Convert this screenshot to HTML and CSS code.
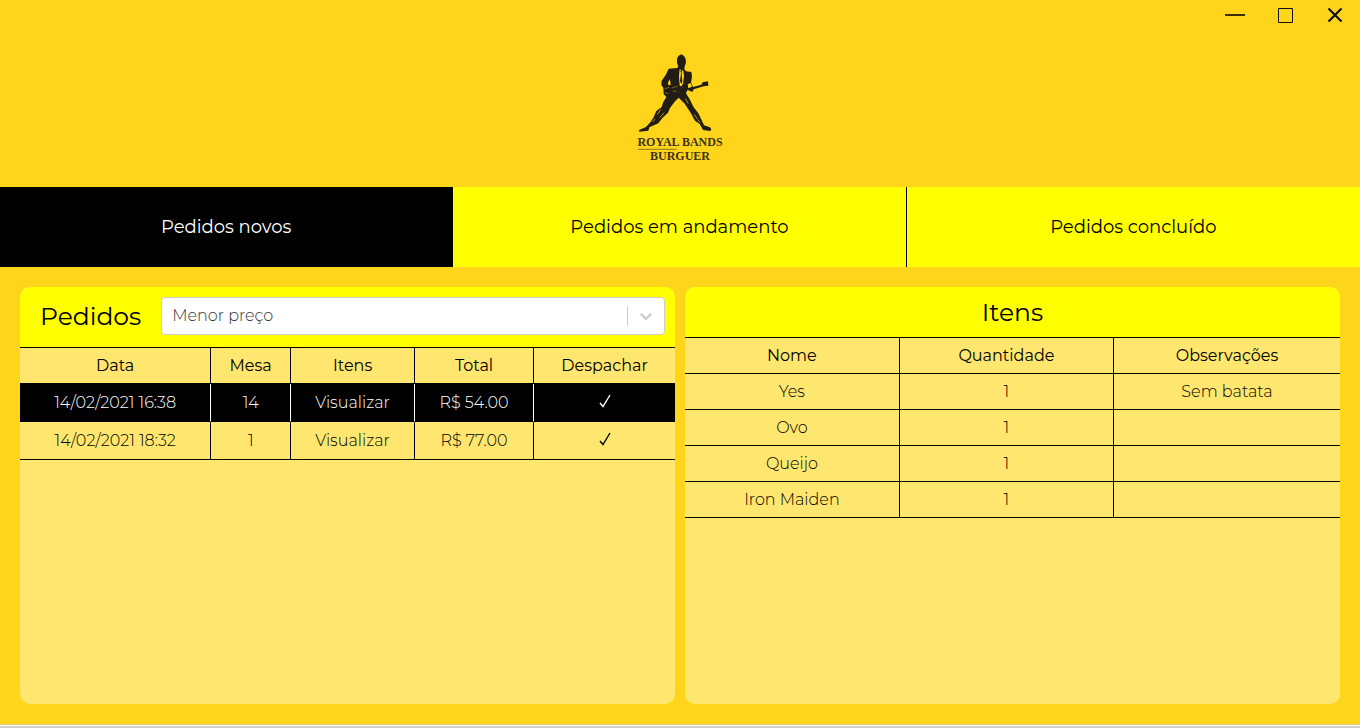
FILE: index.html
```html
<!DOCTYPE html>
<html lang="pt-BR">
<head>
<meta charset="utf-8">
<meta name="viewport" content="width=device-width, initial-scale=1">
<title>Royal Bands Burguer</title>
<link rel="stylesheet" href="styles.css">
</head>
<body>
<div class="app">
  <div class="titlebar">
    <button class="window-button" type="button" aria-label="Minimizar"><svg width="20" height="20" viewBox="0 0 20 20"><path d="M0 10H20" stroke="#3b3005" stroke-width="2"/></svg></button>
    <button class="window-button" type="button" aria-label="Maximizar"><svg width="20" height="20" viewBox="0 0 20 20"><path d="M3.500 3.500H17.500V17.500H3.500Z" fill="none" stroke="#111" stroke-width="1"/></svg></button>
    <button class="window-button" type="button" aria-label="Fechar"><svg width="20" height="20" viewBox="0 0 20 20"><path d="M3.500 3.500L16.500 16.500M16.500 3.500L3.500 16.500" stroke="#111" stroke-width="2.200"/></svg></button>
  </div>

  <header class="brand">
    <svg class="logo" viewBox="0 0 300 345" role="img" aria-label="Royal Bands Burguer">
      <g transform="translate(15 0)">
        <path fill="#211c14" d="M139 13L147 18L152 27L153 38L149 49L148 57L153 64L169 66L171 80L168 97L174 111L199 104L203 97L219 94L220 107L206 109L176 118L173 125L164 123L158 119L153 130L164 148L176 172L190 190L200 211L207 226L225 232L229 238L226 243L204 240L194 222L180 212L166 187L148 160L131 143L119 155L105 174L99 188L82 204L70 220L43 232L40 242L13 245L12 240L33 231L46 217L55 203L64 183L80 171L85 156L94 141L86 132L85 114L79 104L80 92L92 75L101 56L127 54L130 49L126 39L126 26L131 17Z"/>
        <path fill="#ffd51b" d="M134 58L145 62L147 78L144 101L139 109L134 107L132 78Z"/>
        <path fill="#211c14" d="M136 60L142 62L140 69L142 96L139 102L135 94L138 69Z"/>
        <path fill="#ffd51b" d="M99 97L105 88L107 105L100 106ZM158 103L167 99L171 110L160 115Z"/>
        <path d="M89 116L103 112M110 114L128 109M113 123L125 124M90 128L101 131" fill="none" stroke="#a58a17" stroke-width="2"/>
        <path d="M77 178L67 194M88 188L74 203M60 207L53 216M151 146L160 161M178 193L187 207M188 208L195 218" fill="none" stroke="#ad9018" stroke-width="3"/>
      </g>
      <g class="logo-text">
        <text x="150" y="288" text-anchor="middle">ROYAL BANDS</text>
        <text x="150" y="330" text-anchor="middle">BURGUER</text>
      </g>
      <path d="M24 298H140" stroke="#8f7820" stroke-width="3"/>
    </svg>
  </header>

  <nav class="tabs" aria-label="Estado dos pedidos">
    <button class="tab tab-active" type="button">Pedidos novos</button>
    <button class="tab" type="button">Pedidos em andamento</button>
    <button class="tab" type="button">Pedidos concluído</button>
  </nav>

  <main class="panels">
    <section class="panel">
      <div class="panel-head orders-head">
        <h2 class="panel-title"><label for="sort">Pedidos</label></h2>
        <div class="select-box">
          <select class="select" id="sort">
            <option>Menor preço</option>
            <option>Maior preço</option>
          </select>
          <span class="select-arrow" aria-hidden="true"><svg width="20" height="20" viewBox="0 0 20 20"><path d="M4.516 7.548c0.436-0.446 1.043-0.481 1.576 0l3.908 3.747 3.908-3.747c0.533-0.481 1.141-0.446 1.574 0 0.436 0.445 0.408 1.197 0 1.615l-4.695 4.502c-0.217 0.223-0.502 0.335-0.787 0.335s-0.570-0.112-0.789-0.335l-4.695-4.502c-0.408-0.418-0.436-1.170 0-1.615z" fill="#ccc"/></svg></span>
        </div>
      </div>
      <table class="grid orders">
        <colgroup><col class="col-date"><col class="col-table"><col class="col-items"><col class="col-total"><col class="col-send"></colgroup>
        <thead><tr><th>Data</th><th>Mesa</th><th>Itens</th><th>Total</th><th>Despachar</th></tr></thead>
        <tbody>
          <tr class="row-active">
            <td>14/02/2021 16:38</td><td>14</td>
            <td><button class="cell-button" type="button">Visualizar</button></td>
            <td>R$ 54.00</td>
            <td><button class="cell-button" type="button" aria-label="Despachar"><svg class="check" viewBox="0 0 12 14"><path d="M1 9L4 12.500L11 1" /></svg></button></td>
          </tr>
          <tr>
            <td>14/02/2021 18:32</td><td>1</td>
            <td><button class="cell-button" type="button">Visualizar</button></td>
            <td>R$ 77.00</td>
            <td><button class="cell-button" type="button" aria-label="Despachar"><svg class="check" viewBox="0 0 12 14"><path d="M1 9L4 12.500L11 1" /></svg></button></td>
          </tr>
        </tbody>
      </table>
    </section>

    <section class="panel">
      <div class="panel-head items-head"><h2 class="panel-title">Itens</h2></div>
      <table class="grid items">
        <colgroup><col class="col-name"><col class="col-qty"><col class="col-notes"></colgroup>
        <thead><tr><th>Nome</th><th>Quantidade</th><th>Observações</th></tr></thead>
        <tbody>
          <tr><td>Yes</td><td>1</td><td>Sem batata</td></tr>
          <tr><td>Ovo</td><td>1</td><td></td></tr>
          <tr><td>Queijo</td><td>1</td><td></td></tr>
          <tr><td>Iron Maiden</td><td>1</td><td></td></tr>
        </tbody>
      </table>
    </section>
  </main>
  <div class="window-edge"></div>
</div>
</body>
</html>
```

FILE: styles.css
```css
*, *::before, *::after { box-sizing: border-box; }

body {
  margin: 0;
  background: #ffd51b;
  color: #000;
  font: 300 16px/20px Montserrat, Inter, "Liberation Sans", sans-serif;
}

button, select { font: inherit; color: inherit; }
button { border: 0; padding: 0; background: none; cursor: pointer; }

.app { display: flex; flex-direction: column; min-height: 100vh; }

.titlebar { display: flex; justify-content: flex-end; height: 30px; }
.window-button { display: flex; align-items: center; justify-content: center; width: 50px; }

.brand { display: flex; justify-content: center; padding: 20px 0 22px; }
.logo { display: block; width: 100px; height: 115px; }
.logo-text { font: 700 36px "Liberation Serif", serif; fill: #3b3218; }

.tabs { display: grid; grid-template-columns: repeat(3, 1fr); height: 80px; }
.tab { background: #ff0; border-right: 1px solid #000; font-size: 18px; font-weight: 400; }
.tab:last-child { border-right: 0; }
.tab-active { background: #000; color: #fff; }

.panels { flex: 1; display: grid; grid-template-columns: 1fr 1fr; gap: 10px; padding: 20px; }
.panel { background: #ffe66f; border-radius: 10px; overflow: hidden; }
.panel-head { display: flex; align-items: center; background: #ff0; border-bottom: 1px solid #000; }
.orders-head { gap: 20px; padding: 10px 10px 12px 20px; }
.items-head { justify-content: center; height: 51px; }
.panel-title { margin: 0; font-size: 25px; line-height: 32px; font-weight: 400; }

.select-box { position: relative; flex: 1; }
.select {
  display: block;
  width: 100%;
  height: 38px;
  padding: 0 50px 0 10px;
  appearance: none;
  background: #fff;
  border: 1px solid #ccc;
  border-radius: 4px;
  color: #333;
}
.select-arrow {
  position: absolute;
  top: 9px;
  right: 1px;
  display: flex;
  padding: 0 8px;
  border-left: 1px solid #ccc;
  pointer-events: none;
}

.grid { width: 100%; border-collapse: separate; border-spacing: 0; table-layout: fixed; text-align: center; }
.grid th, .grid td { height: 36px; padding: 0; border-bottom: 1px solid #000; border-right: 1px solid #000; }
.grid th { font-weight: 400; }
.grid th:last-child, .grid td:last-child { border-right: 0; }
.orders td { height: 38px; }
.row-active { background: #000; color: #fff; }
.row-active td { border-right-color: #fff; }

.col-date { width: 29.2%; }
.col-table { width: 12.2%; }
.col-items { width: 18.9%; }
.col-total { width: 18.2%; }
.col-send { width: 21.5%; }
.col-name { width: 32.8%; }
.col-qty { width: 32.7%; }
.col-notes { width: 34.5%; }

.cell-button { width: 100%; }
.check { display: block; width: 12px; height: 14px; margin: 0 auto; fill: none; stroke: currentColor; stroke-width: 1.4; }

.window-edge { height: 4px; background: #d0d0c4; border-top: 1px solid #d8cc88; box-shadow: inset 0 1px #fff; }
```
